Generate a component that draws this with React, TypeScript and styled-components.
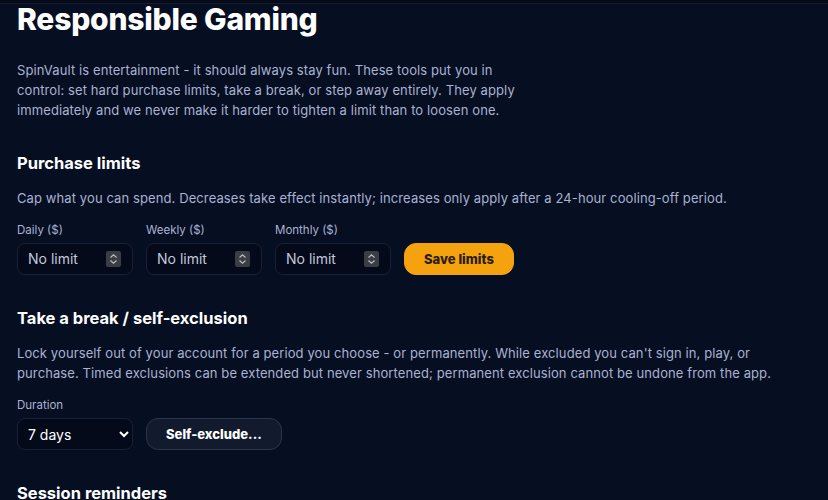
import React from "react"
import styled, { createGlobalStyle } from "styled-components"

const GlobalStyle = createGlobalStyle`
  html, body {
    margin: 0;
    padding: 0;
    background: #060e22;
  }
  body {
    font-family: Inter, "Liberation Sans", sans-serif;
    color: #aab3d0;
    overflow: hidden;
  }
`

const TopBar = styled.div`
  height: 3px;
  background: #050a19;
  border-bottom: 1px solid #161d33;
`

const Page = styled.main`
  padding: 0 17px;
`

const Title = styled.h1`
  margin: 0;
  font-size: 30px;
  line-height: 30px;
  font-weight: 800;
  letter-spacing: -0.2px;
  color: #ffffff;
`

const Intro = styled.p`
  margin: 26px 0 0;
  max-width: 510px;
  font-size: 13px;
  line-height: 20px;
  letter-spacing: 0.1px;
`

const Section = styled.section`
  margin-top: 31px;
`

const SectionTitle = styled.h2`
  margin: 0;
  font-size: 16.5px;
  line-height: 24px;
  font-weight: 700;
  color: #ffffff;
`

const Desc = styled.p`
  margin: 13px 0 0;
  font-size: 13px;
  line-height: 20px;
  letter-spacing: 0.1px;
  max-width: 780px;
`

const Row = styled.div`
  display: flex;
  align-items: flex-end;
  gap: 13px;
  margin-top: 14px;
`

const Field = styled.label`
  display: flex;
  flex-direction: column;
  gap: 5px;
  font-size: 11.5px;
  line-height: 16px;
  color: #aab3d0;
`

const InputBox = styled.div`
  display: flex;
  align-items: center;
  box-sizing: border-box;
  width: 116px;
  height: 32px;
  padding: 0 11px 0 10px;
  background: #040a1a;
  border: 1px solid #182038;
  border-radius: 8px;
`

const NumberInput = styled.input`
  flex: 1;
  min-width: 0;
  border: 0;
  outline: 0;
  background: transparent;
  font: inherit;
  font-size: 14px;
  color: #c3c8dc;
  padding: 0;
  &::placeholder {
    color: #c3c8dc;
  }
`

const Spinner = styled.span`
  display: flex;
  align-items: center;
  justify-content: center;
  width: 15px;
  height: 16px;
  background: #3b3d44;
  border-radius: 2px;
`

const Select = styled.select`
  box-sizing: border-box;
  width: 116px;
  height: 32px;
  padding: 0 8px 0 6px;
  background: #040a1a;
  border: 1px solid #182038;
  border-radius: 8px;
  color: #ffffff;
  font-family: Inter, "Liberation Sans", sans-serif;
  font-size: 14px;
  outline: 0;
`

const Button = styled.button<{ $primary?: boolean }>`
  box-sizing: border-box;
  height: 32px;
  padding: 0 19px;
  border-radius: 12px;
  font-family: Inter, "Liberation Sans", sans-serif;
  font-size: 13px;
  font-weight: 800;
  cursor: pointer;
  background: ${(p) => (p.$primary ? "#f4a20d" : "#121a2e")};
  color: ${(p) => (p.$primary ? "#2a1c06" : "#ffffff")};
  border: 1px solid ${(p) => (p.$primary ? "#f4a20d" : "#2b3550")};
`

const Chevrons = () => (
  <svg width="9" height="12" viewBox="0 0 9 12" fill="none" stroke="#b8bcc8" strokeWidth="1.2">
    <path d="M1.5 4.5 L4.5 1.8 L7.5 4.5" />
    <path d="M1.5 7.5 L4.5 10.2 L7.5 7.5" />
  </svg>
)

const LimitInput = ({ label }: { label: string }) => (
  <Field>
    {label}
    <InputBox>
      <NumberInput type="text" placeholder="No limit" />
      <Spinner>
        <Chevrons />
      </Spinner>
    </InputBox>
  </Field>
)

export default function App() {
  return (
    <>
      <GlobalStyle />
      <TopBar />
      <Page>
        <Title>Responsible Gaming</Title>
        <Intro>
          SpinVault is entertainment - it should always stay fun. These tools put you in
          control: set hard purchase limits, take a break, or step away entirely. They apply
          immediately and we never make it harder to tighten a limit than to loosen one.
        </Intro>

        <Section>
          <SectionTitle>Purchase limits</SectionTitle>
          <Desc>
            Cap what you can spend. Decreases take effect instantly; increases only apply after a
            24-hour cooling-off period.
          </Desc>
          <Row>
            <LimitInput label="Daily ($)" />
            <LimitInput label="Weekly ($)" />
            <LimitInput label="Monthly ($)" />
            <Button $primary>Save limits</Button>
          </Row>
        </Section>

        <Section>
          <SectionTitle>Take a break / self-exclusion</SectionTitle>
          <Desc>
            Lock yourself out of your account for a period you choose - or permanently. While
            excluded you can't sign in, play, or purchase. Timed exclusions can be extended but
            never shortened; permanent exclusion cannot be undone from the app.
          </Desc>
          <Row>
            <Field>
              Duration
              <Select defaultValue="7">
                <option value="1">24 hours</option>
                <option value="7">7 days</option>
                <option value="30">30 days</option>
                <option value="180">6 months</option>
                <option value="perm">Permanent</option>
              </Select>
            </Field>
            <Button>Self-exclude...</Button>
          </Row>
        </Section>

        <Section>
          <SectionTitle>Session reminders</SectionTitle>
        </Section>
      </Page>
    </>
  )
}
